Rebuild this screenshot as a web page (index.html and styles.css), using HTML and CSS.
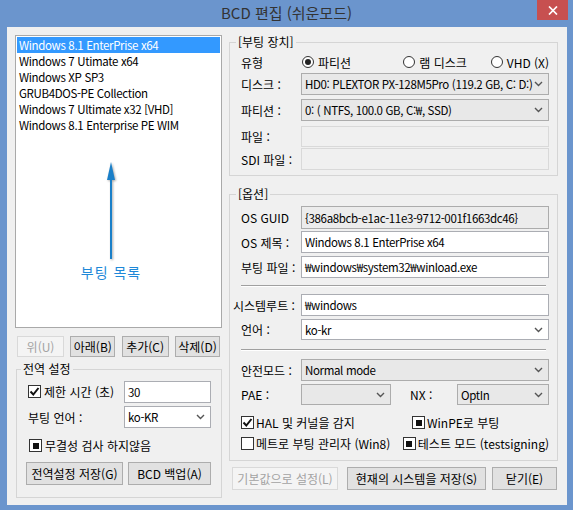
FILE: index.html
```html
<!DOCTYPE html>
<html lang="ko">
<head>
<meta charset="utf-8">
<title>BCD 편집 (쉬운모드)</title>
<link rel="stylesheet" href="styles.css">
</head>
<body>
<div class="window">
  <div class="titlebar">
    <span></span>
    <span class="title">BCD 편집 (쉬운모드)</span>
    <div class="close"><svg width="10" height="9" viewBox="0 0 10 9"><path d="M1 0.5L9 8.5M9 0.5L1 8.5" stroke="#fff" stroke-width="1.7"/></svg></div>
  </div>
  <div class="client">
    <div class="left">
      <div class="listbox">
        <div class="item sel">Windows 8.1 EnterPrise x64</div>
        <div class="item">Windows 7 Utimate x64</div>
        <div class="item">Windows XP SP3</div>
        <div class="item">GRUB4DOS-PE Collection</div>
        <div class="item">Windows 7 Ultimate x32 [VHD]</div>
        <div class="item">Windows 8.1 Enterprise PE WIM</div>
        <div class="hint">
          <svg class="arrow" width="12" height="98" viewBox="0 0 12 98"><path d="M6 14V97" stroke="#1a7fc8" stroke-width="2"/><path d="M6 0L2 18H10Z" fill="#1a7fc8"/></svg>
          <span class="hint-text">부팅 목록</span>
        </div>
      </div>
      <div class="btnrow">
        <div class="btn disabled w47">위(U)</div>
        <div class="btn w45">아래(B)</div>
        <div class="btn w47">추가(C)</div>
        <div class="btn w45">삭제(D)</div>
      </div>
      <fieldset class="group gset">
        <legend>전역 설정</legend>
        <div class="gbody">
          <div class="lrow r1">
            <div class="glab toplab"><span class="cb chk"><svg width="11" height="11" viewBox="0 0 11 11"><path d="M1.5 5.5L4.3 8.5L9.5 2" fill="none" stroke="#111" stroke-width="2"/></svg></span><span>제한 시간 (초)</span></div>
            <div class="tb w87">30</div>
          </div>
          <div class="lrow r2">
            <div class="glab">부팅 언어 :</div>
            <div class="sel-box white w87"><span>ko-KR</span><svg class="chev" width="9" height="6" viewBox="0 0 9 6"><path d="M1 1L4.5 4.5L8 1" fill="none" stroke="#555" stroke-width="1.4"/></svg></div>
          </div>
          <div class="lrow r3">
            <span class="cb ind"></span><span class="cbtext">무결성 검사 하지않음</span>
          </div>
          <div class="lrow r4">
            <div class="btn w97">전역설정 저장(G)</div>
            <div class="btn w83">BCD 백업(A)</div>
          </div>
        </div>
      </fieldset>
    </div>

    <div class="right">
      <fieldset class="group g1">
        <legend>[부팅 장치]</legend>
        <div class="rbody">
          <div class="row radios">
            <div class="lab">유형</div>
            <div class="ropt o1"><span class="rb on"></span><span>파티션</span></div>
            <div class="ropt o2"><span class="rb"></span><span>램 디스크</span></div>
            <div class="ropt o3"><span class="rb"></span><span>VHD (X)</span></div>
          </div>
          <div class="row h22 m3">
            <div class="lab">디스크 :</div>
            <div class="sel-box w248"><span>HD0: PLEXTOR PX-128M5Pro (119.2 GB, C: D:)</span><svg class="chev" width="9" height="6" viewBox="0 0 9 6"><path d="M1 1L4.5 4.5L8 1" fill="none" stroke="#555" stroke-width="1.4"/></svg></div>
          </div>
          <div class="row h22 m4">
            <div class="lab">파티션 :</div>
            <div class="sel-box w248"><span>0: ( NTFS, 100.0 GB, C:₩, SSD)</span><svg class="chev" width="9" height="6" viewBox="0 0 9 6"><path d="M1 1L4.5 4.5L8 1" fill="none" stroke="#555" stroke-width="1.4"/></svg></div>
          </div>
          <div class="row h21 m5">
            <div class="lab">파일 :</div>
            <div class="tb dis w248"></div>
          </div>
          <div class="row h22 m1">
            <div class="lab">SDI 파일 :</div>
            <div class="tb dis w248"></div>
          </div>
        </div>
      </fieldset>

      <fieldset class="group g2">
        <legend>[옵션]</legend>
        <div class="rbody">
          <div class="row h23">
            <div class="lab">OS GUID</div>
            <div class="tb ro w248">{386a8bcb-e1ac-11e3-9712-001f1663dc46}</div>
          </div>
          <div class="row h22 m2">
            <div class="lab">OS 제목 :</div>
            <div class="tb w248">Windows 8.1 EnterPrise x64</div>
          </div>
          <div class="row h22 m3">
            <div class="lab">부팅 파일 :</div>
            <div class="tb w248">₩windows₩system32₩winload.exe</div>
          </div>
          <div class="sep s7"></div>
          <div class="row h22 m7">
            <div class="lab wide">시스템루트 :</div>
            <div class="tb w248">₩windows</div>
          </div>
          <div class="row h21 m3">
            <div class="lab">언어 :</div>
            <div class="sel-box white w248"><span>ko-kr</span><svg class="chev" width="9" height="6" viewBox="0 0 9 6"><path d="M1 1L4.5 4.5L8 1" fill="none" stroke="#555" stroke-width="1.4"/></svg></div>
          </div>
          <div class="sep s9"></div>
          <div class="row h22 m8">
            <div class="lab">안전모드 :</div>
            <div class="sel-box w248"><span>Normal mode</span><svg class="chev" width="9" height="6" viewBox="0 0 9 6"><path d="M1 1L4.5 4.5L8 1" fill="none" stroke="#555" stroke-width="1.4"/></svg></div>
          </div>
          <div class="row h21 m3">
            <div class="lab">PAE :</div>
            <div class="sel-box w90"><span></span><svg class="chev" width="9" height="6" viewBox="0 0 9 6"><path d="M1 1L4.5 4.5L8 1" fill="none" stroke="#555" stroke-width="1.4"/></svg></div>
            <div class="lab nx">NX :</div>
            <div class="sel-box w92"><span>OptIn</span><svg class="chev" width="9" height="6" viewBox="0 0 9 6"><path d="M1 1L4.5 4.5L8 1" fill="none" stroke="#555" stroke-width="1.4"/></svg></div>
          </div>
          <div class="row chkrow m11">
            <div class="chkcell c1"><span class="cb chk"><svg width="11" height="11" viewBox="0 0 11 11"><path d="M1.5 5.5L4.3 8.5L9.5 2" fill="none" stroke="#111" stroke-width="2"/></svg></span><span class="cbtext">HAL 및 커널을 감지</span></div>
            <div class="chkcell"><span class="cb ind"></span><span class="cbtext">WinPE로 부팅</span></div>
          </div>
          <div class="row chkrow m8">
            <div class="chkcell c1"><span class="cb"></span><span class="cbtext">메트로 부팅 관리자 (Win8)</span></div>
            <div class="chkcell"><span class="cb ind"></span><span class="cbtext">테스트 모드 (testsigning)</span></div>
          </div>
        </div>
      </fieldset>

      <div class="bottombtns">
        <div class="btn disabled w106">기본값으로 설정(L)</div>
        <div class="btn w139">현재의 시스템을 저장(S)</div>
        <div class="btn w65">닫기(E)</div>
      </div>
    </div>
  </div>
</div>
</body>
</html>
```

FILE: styles.css
```css
* { box-sizing: border-box; }
html, body { margin: 0; padding: 0; }
body {
  font-family: "Noto Sans CJK KR", "Open Sans", sans-serif;
  font-size: 12px;
  color: #000;
  background: #6b95cd;
}

.window {
  width: 573px;
  height: 510px;
  background: #6b95cd;
  display: flex;
  flex-direction: column;
}

.titlebar {
  height: 27px;
  flex: none;
  display: grid;
  grid-template-columns: 1fr auto 1fr;
  align-items: start;
}
.title {
  font-size: 15px;
  line-height: 26px;
  color: #333;
}
.close {
  justify-self: end;
  width: 31px;
  height: 20px;
  margin-right: 5px;
  background: #c75050;
  display: flex;
  align-items: center;
  justify-content: center;
}

.client {
  margin: 0 6px 0 7px;
  height: 478px;
  background: #f0f0f0;
  display: flex;
  gap: 7px;
  padding: 7px 0 0 8px;
}

/* condensed latin text (list, text boxes, combos) */
.item, .tb, .sel-box span {
  font-size: 11.5px;
  letter-spacing: -0.35px;
}

/* left column */
.left {
  width: 207px;
  display: flex;
  flex-direction: column;
  padding-top: 1px;
}
.listbox {
  position: relative;
  height: 293px;
  border: 1px solid #a9a9a9;
  background: #fff;
  padding: 1px;
}
.item {
  height: 16px;
  line-height: 16px;
  padding-left: 2px;
  white-space: nowrap;
}
.item.sel { background: #3399ff; color: #fff; }

.hint {
  position: absolute;
  left: 59px;
  width: 72px;
  top: 126px;
  display: flex;
  flex-direction: column;
  align-items: center;
}
.arrow { filter: drop-shadow(1px 1px 1px rgba(0,0,0,0.35)); }
.hint-text {
  margin-top: 3px;
  font-size: 14px;
  line-height: 18px;
  color: #1e88d8;
  letter-spacing: 1px;
  white-space: nowrap;
}

.btnrow {
  margin-top: 8px;
  padding: 0 2px;
  display: flex;
  justify-content: space-between;
}
.btn {
  height: 21px;
  flex: none;
  border: 1px solid #adadad;
  background: #e1e1e1;
  display: flex;
  align-items: center;
  justify-content: center;
  white-space: nowrap;
  line-height: 1;
}
.btn.disabled { background: #f4f4f4; border-color: #d9d9d9; color: #a3a3a3; }
.w45 { width: 45px; }
.w47 { width: 47px; }
.w97 { width: 97px; }
.w83 { width: 83px; }
.w106 { width: 106px; }
.w139 { width: 139px; }
.w65 { width: 65px; }
.w87 { width: 87px; }
.w90 { width: 90px; }
.w92 { width: 92px; }
.w248 { width: 248px; }

.group {
  margin: 0;
  padding: 0;
  border: 1px solid #d5d5d5;
  min-width: 0;
}
.group legend {
  padding: 0 2px;
  line-height: 16px;
  font-size: 12px;
}

.gset {
  margin-top: 4px;
  margin-left: 1px;
  width: 206px;
}
.gset legend { margin-left: 4px; }
.gbody { padding: 4px 0 12px 11px; }
.lrow { display: flex; align-items: center; }
.r1 { height: 22px; align-items: flex-start; }
.r2 { height: 22px; margin-top: 3px; }
.r3 { height: 13px; margin-top: 11px; padding-left: 1px; }
.r4 { height: 23px; margin-top: 10px; margin-left: -2px; gap: 5px; }
.r4 .btn { height: 23px; }
.glab { width: 96px; flex: none; white-space: nowrap; }
.toplab { display: flex; align-items: center; margin-top: 2px; }
.toplab .cb { margin-right: 3px; }

/* inputs */
.tb {
  height: 100%;
  flex: none;
  border: 1px solid #abadb3;
  background: #fff;
  padding-left: 3px;
  display: flex;
  align-items: center;
  white-space: nowrap;
  overflow: hidden;
}
.tb.dis { background: #f0f0f0; border-color: #d9d9d9; }
.tb.ro { background: #ececec; border-color: #acacac; }
.sel-box {
  height: 100%;
  flex: none;
  border: 1px solid #acacac;
  background: #e8e8e8;
  padding-left: 3px;
  padding-right: 5px;
  display: flex;
  align-items: center;
  justify-content: space-between;
  white-space: nowrap;
}
.sel-box.white { background: #fff; border-color: #abadb3; }
.chev { flex: none; }

/* checkbox & radio */
.cb {
  width: 13px;
  height: 13px;
  flex: none;
  border: 1px solid #333;
  background: #fff;
  display: inline-flex;
  align-items: center;
  justify-content: center;
}
.cb.ind::after {
  content: "";
  width: 6px;
  height: 6px;
  background: #111;
}
.cbtext { margin-left: 3px; white-space: nowrap; }
.rb {
  width: 12px;
  height: 12px;
  flex: none;
  border: 1px solid #333;
  border-radius: 50%;
  background: #fff;
  display: inline-flex;
  align-items: center;
  justify-content: center;
}
.rb.on::after {
  content: "";
  width: 6px;
  height: 6px;
  border-radius: 50%;
  background: #222;
}

/* right column */
.right {
  width: 329px;
  display: flex;
  flex-direction: column;
}
.g1 legend, .g2 legend { margin-left: 6px; }
.g2 { margin-top: 10px; }
.g1 .rbody { padding: 4px 8px 5px 11px; }
.g2 .rbody { padding: 4px 8px 10px 11px; }
.row { display: flex; align-items: center; }
.lab { width: 60px; flex: none; white-space: nowrap; }
.lab.wide { width: 68px; margin-left: -8px; }
.lab.nx { width: 47px; margin-left: 19px; }
.radios { height: 16px; }
.ropt { display: flex; align-items: center; gap: 4px; white-space: nowrap; }
.o1 { width: 103px; padding-left: 1px; }
.o2 { width: 88px; }
.h21 { height: 21px; }
.h22 { height: 22px; }
.h23 { height: 23px; }
.m1 { margin-top: 1px; }
.m2 { margin-top: 2px; }
.m3 { margin-top: 3px; }
.m4 { margin-top: 4px; }
.m5 { margin-top: 5px; }
.m7 { margin-top: 7px; }
.m8 { margin-top: 8px; }
.m11 { margin-top: 11px; }
.sep {
  width: 305px;
  height: 2px;
  border-top: 1px solid #a0a0a0;
  border-bottom: 1px solid #fff;
}
.s7 { margin-top: 7px; }
.s9 { margin-top: 9px; }
.chkrow { height: 13px; }
.chkcell { display: flex; align-items: center; }
.chkcell.c1 { width: 171px; }
.chkcell .cbtext { margin-left: 2px; }

.bottombtns {
  margin-top: 6px;
  margin-left: 3px;
  display: flex;
  gap: 0;
}
.bottombtns .btn { height: 23px; }
.bottombtns .w139 { margin-left: 9px; }
.bottombtns .w65 { margin-left: 6px; }
```
